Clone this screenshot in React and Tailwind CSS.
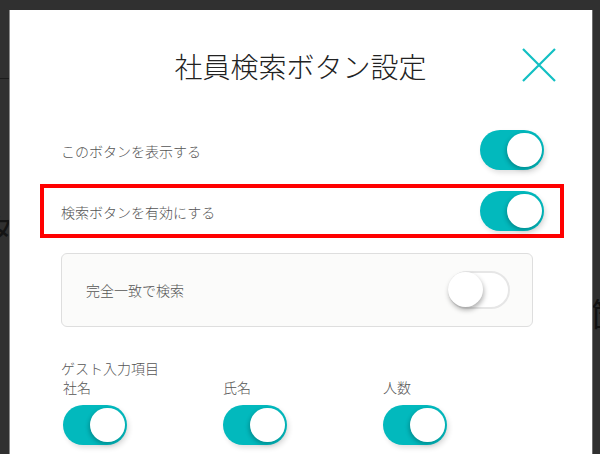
import React from 'react';

const font = { fontFamily: '"Noto Sans CJK JP", "Noto Sans", sans-serif' };

function Toggle({ on }) {
  if (on) {
    return (
      <div className="relative w-[64px] h-[40px] rounded-full bg-[#02b9bd] shadow-[2px_3px_5px_rgba(0,0,0,0.12)] shrink-0">
        <div className="absolute right-[2px] top-[3px] w-[35px] h-[34px] rounded-full bg-white shadow-[-1px_2px_4px_rgba(0,0,0,0.25)]"></div>
      </div>
    );
  }
  return (
    <div className="relative w-[62px] h-[38px] rounded-full bg-white border-2 border-[#e6e6e6] shrink-0">
      <div className="absolute -left-[2px] top-[-1px] w-[35px] h-[35px] rounded-full bg-white shadow-[1px_3px_5px_rgba(0,0,0,0.3)]"></div>
    </div>
  );
}

function Row({ label, on, highlight }) {
  return (
    <div
      className={
        'flex items-center justify-between h-[54px] pl-[17px] pr-[16px] border-4 ' +
        (highlight ? 'border-[#ff0000]' : 'border-transparent')
      }
    >
      <span className="text-[14px] font-light text-[#555] pt-[2px]">{label}</span>
      <Toggle on={on} />
    </div>
  );
}

export default function App() {
  return (
    <div className="w-[600px] h-[454px] overflow-hidden bg-[#303030] flex" style={font}>
      {/* left strip of underlying page */}
      <div className="w-[9px] shrink-0 flex flex-col overflow-hidden">
        <div className="h-[78px] shrink-0"></div>
        <div className="h-px bg-[#1c1c1c]"></div>
        <div className="mt-[130px] -ml-[16px] text-[30px] leading-[36px] text-[#141414]">タ</div>
      </div>

      <div className="w-px shrink-0 mt-[10px] bg-[#8a8a8a]"></div>

      {/* modal */}
      <div className="w-[582px] shrink-0 mt-[10px] bg-white">
        <div className="relative flex justify-center items-center h-[40px] mt-[36px] -ml-px">
          <h1 className="text-[28px] leading-[40px] text-[#222] font-light">社員検索ボタン設定</h1>
          <button className="absolute right-[36px] top-[2px] w-[34px] h-[34px]">
            <svg width="34" height="34" viewBox="0 0 34 34">
              <path d="M1 1 L33 33 M33 1 L1 33" stroke="#12bfc3" strokeWidth="2.2" fill="none" />
            </svg>
          </button>
        </div>

        <div className="ml-[30px] mr-[28px] mt-[37px] flex flex-col gap-[7px]">
          <Row label="このボタンを表示する" on />
          <Row label="検索ボタンを有効にする" on highlight />
        </div>

        <div className="ml-[51px] mr-[59px] mt-[15px] h-[74px] rounded-[6px] border border-[#dedede] bg-[#fbfbfa] flex items-center justify-between pl-[24px] pr-[22px]">
          <span className="text-[14px] font-light text-[#555]">完全一致で検索</span>
          <Toggle on={false} />
        </div>

        <div className="ml-[51px] mt-[31px]">
          <div className="text-[14px] leading-[20px] font-light text-[#555]">ゲスト入力項目</div>
          <div className="flex pl-[2px] -mt-[1px]">
            {['社名', '氏名', '人数'].map((l) => (
              <div key={l} className="w-[160px] flex flex-col gap-[8px]">
                <span className="text-[14px] leading-[20px] font-light text-[#555]">{l}</span>
                <Toggle on />
              </div>
            ))}
          </div>
        </div>
      </div>

      <div className="w-px shrink-0 mt-[10px] bg-[#6e6e6e]"></div>

      {/* right strip of underlying page */}
      <div className="w-[7px] shrink-0 overflow-hidden">
        <div className="mt-[294px] -ml-[2px] text-[32px] leading-[36px] text-[#111] whitespace-nowrap">箇</div>
      </div>
    </div>
  );
}
